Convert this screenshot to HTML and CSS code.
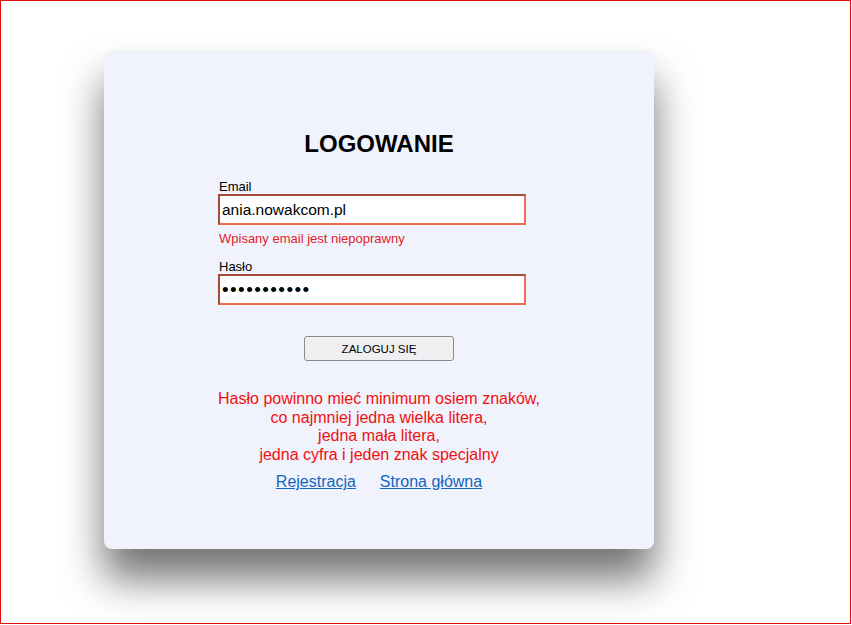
FILE: index.html
```html
<!DOCTYPE html>
<html lang="pl">
<head>
<meta charset="utf-8">
<title>Logowanie</title>
<link rel="stylesheet" href="styles.css">
</head>
<body>
<div class="frame">
  <div class="card">
    <h1 class="title">LOGOWANIE</h1>
    <form class="form">
      <label class="label">Email</label>
      <input class="field" type="text" value="ania.nowakcom.pl">
      <div class="error">Wpisany email jest niepoprawny</div>
      <label class="label label-pass">Hasło</label>
      <input class="field field-pass" type="password" value="12345678901">
      <div class="actions"><button type="button" class="btn">ZALOGUJ SIĘ</button></div>
    </form>
    <p class="hint">Hasło powinno mieć minimum osiem znaków,<br>co najmniej jedna wielka litera,<br>jedna mała litera,<br>jedna cyfra i jeden znak specjalny</p>
    <div class="links"><a href="#">Rejestracja</a><a href="#">Strona główna</a></div>
  </div>
</div>
</body>
</html>
```
FILE: styles.css
```css
html, body {
  margin: 0;
  padding: 0;
  background: #ffffff;
  font-family: "Liberation Sans", Arial, sans-serif;
}
.frame {
  box-sizing: border-box;
  width: 851px;
  height: 624px;
  border: 1px solid #e01010;
  padding: 49px 0 0 103px;
  overflow: hidden;
}
.card {
  box-sizing: border-box;
  width: 550px;
  height: 499px;
  background: #f0f3fb;
  border-radius: 8px;
  box-shadow: 0 30px 40px rgba(0, 0, 0, 0.55);
  padding-top: 80px;
  display: flex;
  flex-direction: column;
  align-items: center;
}
.title {
  margin: 0;
  font-size: 24px;
  font-weight: bold;
  color: #000;
  line-height: 28px;
}
.form {
  width: 308px;
  margin-top: 21px;
  align-self: flex-start;
  margin-left: 114px;
  display: flex;
  flex-direction: column;
}
.label {
  font-size: 13px;
  color: #000;
  line-height: 15px;
  margin-left: 1px;
}
.label-pass {
  margin-top: 13px;
}
.field {
  box-sizing: border-box;
  width: 308px;
  height: 31px;
  margin: 0;
  padding: 0 2px;
  border: 2px solid;
  border-color: #a24b3c #ef6a4e #ef6a4e #a24b3c;
  background: #fff;
  font-family: "Liberation Sans", Arial, sans-serif;
  font-size: 15.5px;
  color: #000;
  outline: none;
}
.field-pass {
  font-size: 19px;
  letter-spacing: 1.4px;
  padding: 0 2px;
}
.error {
  margin-top: 6px;
  font-size: 13px;
  line-height: 15px;
  color: #e3202a;
  margin-left: 1px;
}
.actions {
  display: flex;
  justify-content: center;
  margin-top: 31px;
  margin-left: 14px;
}
.btn {
  box-sizing: border-box;
  width: 150px;
  height: 25px;
  border: 1px solid #8a8a8a;
  border-radius: 3px;
  background: #efeff2;
  font-family: "Liberation Sans", Arial, sans-serif;
  font-size: 11.5px;
  color: #000;
  padding: 0;
}
.hint {
  margin: 29px 0 0;
  text-align: center;
  font-size: 16px;
  line-height: 18.5px;
  color: #f01010;
}
.links {
  display: flex;
  gap: 24px;
  margin-top: 9px;
}
.links a {
  font-size: 16px;
  color: #1565c0;
  text-decoration: underline;
}
```
